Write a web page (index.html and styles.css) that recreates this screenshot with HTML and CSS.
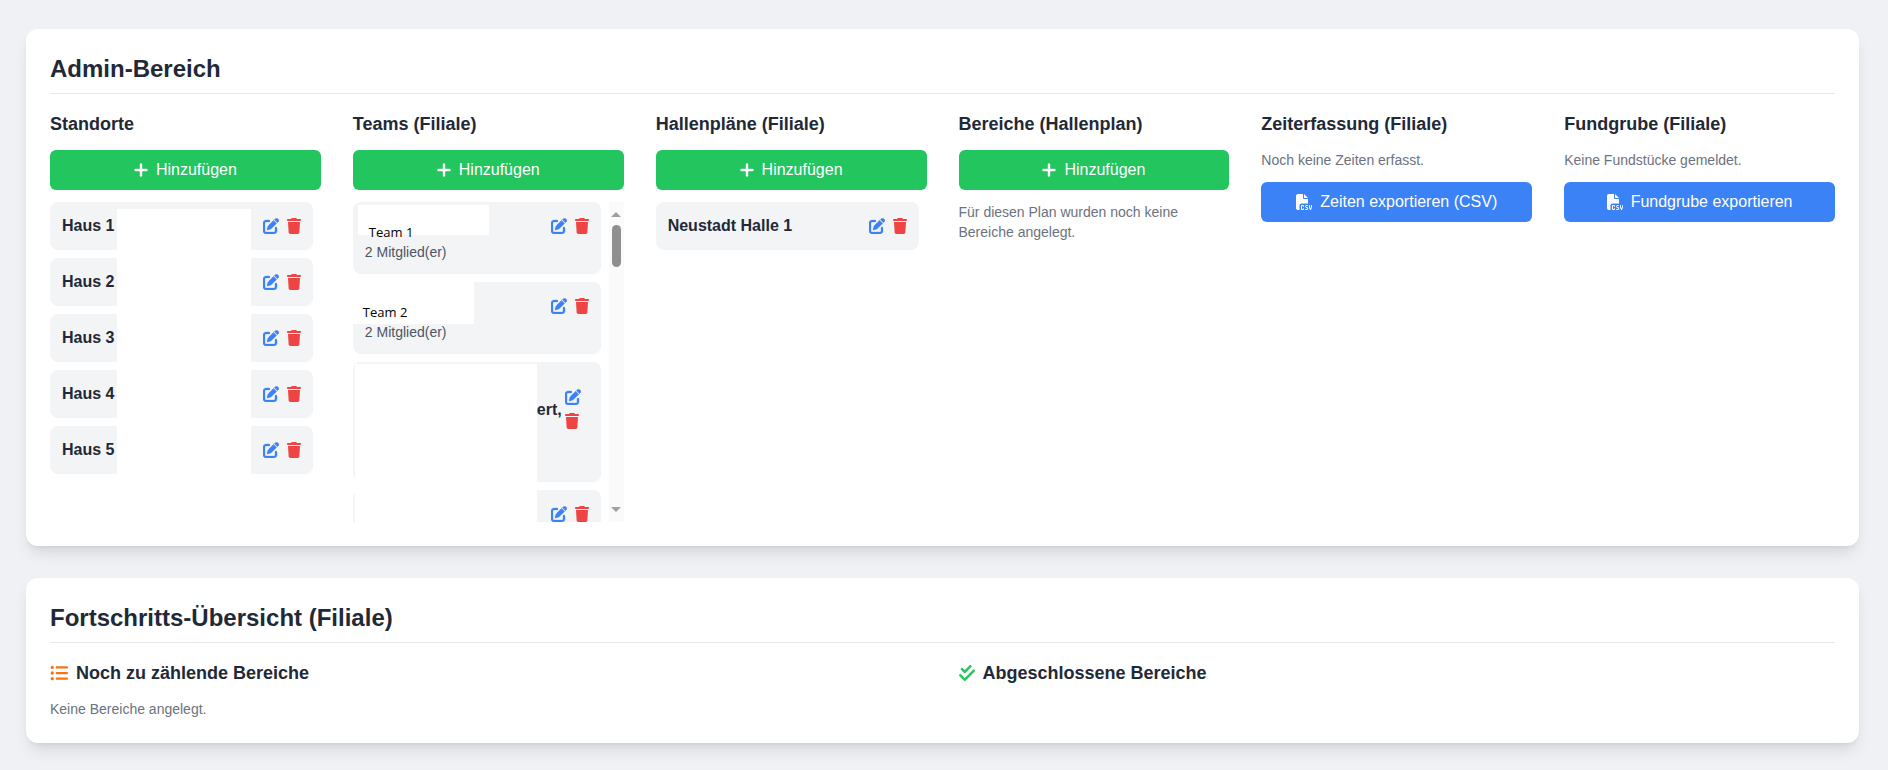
FILE: index.html
```html
<!DOCTYPE html>
<html lang="de">
<head>
<meta charset="utf-8">
<title>Admin-Bereich</title>
<link rel="stylesheet" href="styles.css">
</head>
<body>
<svg class="sprite" aria-hidden="true">
  <symbol id="i-edit" viewBox="0 0 512 512"><path d="M471.6 21.7c-21.9-21.9-57.3-21.9-79.2 0L362.3 51.7l97.9 97.9 30.1-30.1c21.9-21.9 21.9-57.3 0-79.2L471.6 21.7zm-299.2 220c-6.1 6.1-10.8 13.6-13.5 21.9l-29.6 88.8c-2.9 8.6-.6 18.1 5.8 24.6s15.9 8.7 24.6 5.8l88.8-29.6c8.2-2.7 15.7-7.4 21.9-13.5L437.7 172.3 339.7 74.3 172.4 241.7zM96 64C43 64 0 107 0 160V416c0 53 43 96 96 96H352c53 0 96-43 96-96V320c0-17.7-14.3-32-32-32s-32 14.3-32 32v96c0 17.7-14.3 32-32 32H96c-17.7 0-32-14.3-32-32V160c0-17.7 14.3-32 32-32h96c17.7 0 32-14.3 32-32s-14.3-32-32-32H96z"/></symbol>
  <symbol id="i-trash" viewBox="0 0 448 512"><path d="M135.2 17.7L128 32H32C14.3 32 0 46.3 0 64S14.3 96 32 96H416c17.7 0 32-14.3 32-32s-14.3-32-32-32H320l-7.2-14.3C307.4 6.8 296.3 0 284.2 0H163.8c-12.1 0-23.2 6.8-28.6 17.7zM416 128H32L53.2 467c1.6 25.3 22.6 45 47.9 45H346.9c25.3 0 46.3-19.7 47.9-45L416 128z"/></symbol>
  <symbol id="i-plus" viewBox="0 0 448 512"><path d="M256 80c0-17.7-14.3-32-32-32s-32 14.3-32 32V224H48c-17.7 0-32 14.3-32 32s14.3 32 32 32H192V432c0 17.7 14.3 32 32 32s32-14.3 32-32V288H400c17.7 0 32-14.3 32-32s-14.3-32-32-32H256V80z"/></symbol>
  <symbol id="i-csv" viewBox="0 0 512 512"><path d="M0 64C0 28.7 28.7 0 64 0H224V128c0 17.7 14.3 32 32 32H384V304H176c-35.3 0-64 28.7-64 64V512H64c-35.3 0-64-28.7-64-64V64zm384 64H256V0L384 128zM200 352h16c22.1 0 40 17.9 40 40v8c0 8.8-7.2 16-16 16s-16-7.2-16-16v-8c0-4.4-3.6-8-8-8H200c-4.4 0-8 3.6-8 8v80c0 4.4 3.6 8 8 8h16c4.4 0 8-3.6 8-8v-8c0-8.8 7.2-16 16-16s16 7.2 16 16v8c0 22.1-17.9 40-40 40H200c-22.1 0-40-17.9-40-40V392c0-22.1 17.9-40 40-40zm133.1 0H368c8.8 0 16 7.2 16 16s-7.2 16-16 16H333.1c-7.2 0-13.1 5.9-13.1 13.1c0 5.2 3 9.9 7.8 12l37.4 16.6c16.3 7.2 26.8 23.4 26.8 41.2c0 24.9-20.2 45.1-45.1 45.1H304c-8.8 0-16-7.2-16-16s7.2-16 16-16h47.9c7.2 0 13.1-5.9 13.1-13.1c0-5.2-3-9.9-7.8-12l-37.4-16.6c-16.3-7.2-26.8-23.4-26.8-41.2c0-24.9 20.2-45.1 45.1-45.1zm98.9 0c8.8 0 16 7.2 16 16v31.6c0 23 5.5 45.6 16 66c10.5-20.3 16-42.9 16-66V368c0-8.8 7.2-16 16-16s16 7.2 16 16v31.6c0 34.7-10.3 68.7-29.6 97.6l-5.1 7.7c-3 4.5-8 7.1-13.3 7.1s-10.3-2.7-13.3-7.1l-5.1-7.7c-19.3-28.9-29.6-62.9-29.6-97.6V368c0-8.8 7.2-16 16-16z"/></symbol>
  <symbol id="i-list" viewBox="0 0 512 512"><path d="M64 144a48 48 0 1 0 0-96 48 48 0 1 0 0 96zM192 64c-17.7 0-32 14.3-32 32s14.3 32 32 32H480c17.7 0 32-14.3 32-32s-14.3-32-32-32H192zm0 160c-17.7 0-32 14.3-32 32s14.3 32 32 32H480c17.7 0 32-14.3 32-32s-14.3-32-32-32H192zm0 160c-17.7 0-32 14.3-32 32s14.3 32 32 32H480c17.7 0 32-14.3 32-32s-14.3-32-32-32H192zM64 464a48 48 0 1 0 0-96 48 48 0 1 0 0 96zm48-208a48 48 0 1 0 -96 0 48 48 0 1 0 96 0z"/></symbol>
  <symbol id="i-check" viewBox="0 0 448 512"><path d="M342.6 86.6c12.5-12.5 12.5-32.8 0-45.3s-32.8-12.5-45.3 0L160 178.7l-57.4-57.4c-12.5-12.5-32.8-12.5-45.3 0s-12.5 32.8 0 45.3l80 80c12.5 12.5 32.8 12.5 45.3 0l160-160zm96 128c12.5-12.5 12.5-32.8 0-45.3s-32.8-12.5-45.3 0L160 402.7 54.6 297.4c-12.5-12.5-32.8-12.5-45.3 0s-12.5 32.8 0 45.3l128 128c12.5 12.5 32.8 12.5 45.3 0l256-256z"/></symbol>
</svg>

<div class="topbar"></div>
<main class="page">
  <section class="card">
    <h2 class="card-title">Admin-Bereich</h2>
    <div class="columns">
      <div class="column">
        <h3 class="col-title">Standorte</h3>
        <button class="btn btn-green"><svg class="btn-icon-plus"><use href="#i-plus"/></svg>Hinzufügen</button>
        <div class="list list-static">
          <div class="item"><div class="item-main"><div class="item-name">Haus 1</div></div><div class="actions"><svg class="ic-edit"><use href="#i-edit"/></svg><svg class="ic-trash"><use href="#i-trash"/></svg></div></div>
          <div class="item"><div class="item-main"><div class="item-name">Haus 2</div></div><div class="actions"><svg class="ic-edit"><use href="#i-edit"/></svg><svg class="ic-trash"><use href="#i-trash"/></svg></div></div>
          <div class="item"><div class="item-main"><div class="item-name">Haus 3</div></div><div class="actions"><svg class="ic-edit"><use href="#i-edit"/></svg><svg class="ic-trash"><use href="#i-trash"/></svg></div></div>
          <div class="item"><div class="item-main"><div class="item-name">Haus 4</div></div><div class="actions"><svg class="ic-edit"><use href="#i-edit"/></svg><svg class="ic-trash"><use href="#i-trash"/></svg></div></div>
          <div class="item"><div class="item-main"><div class="item-name">Haus 5</div></div><div class="actions"><svg class="ic-edit"><use href="#i-edit"/></svg><svg class="ic-trash"><use href="#i-trash"/></svg></div></div>
          <div class="patch patch-haus"></div>
        </div>
      </div>

      <div class="column">
        <h3 class="col-title">Teams (Filiale)</h3>
        <button class="btn btn-green"><svg class="btn-icon-plus"><use href="#i-plus"/></svg>Hinzufügen</button>
        <div class="scroll-wrap">
          <div class="list list-scroll">
            <div class="item">
              <div class="item-main"><div class="item-name">&nbsp;</div><div class="item-sub">2 Mitglied(er)</div></div>
              <div class="actions"><svg class="ic-edit"><use href="#i-edit"/></svg><svg class="ic-trash"><use href="#i-trash"/></svg></div>
              <div class="patch patch-team1">Team 1</div>
            </div>
            <div class="item">
              <div class="item-main"><div class="item-name">&nbsp;</div><div class="item-sub">2 Mitglied(er)</div></div>
              <div class="actions"><svg class="ic-edit"><use href="#i-edit"/></svg><svg class="ic-trash"><use href="#i-trash"/></svg></div>
              <div class="patch patch-team2">Team 2</div>
            </div>
            <div class="item">
              <div class="item-main item-main-wrapped"><div class="item-name">&nbsp;<br>ert,<br>&nbsp;</div><div class="item-sub">&nbsp;</div></div>
              <div class="actions actions-stacked"><svg class="ic-edit"><use href="#i-edit"/></svg><svg class="ic-trash"><use href="#i-trash"/></svg></div>
              <div class="patch patch-team3"></div>
            </div>
            <div class="item">
              <div class="item-main"><div class="item-name">&nbsp;</div><div class="item-sub">&nbsp;</div></div>
              <div class="actions"><svg class="ic-edit"><use href="#i-edit"/></svg><svg class="ic-trash"><use href="#i-trash"/></svg></div>
            </div>
          </div>
          <div class="scrollbar" aria-hidden="true">
            <span class="sb-up"></span>
            <span class="sb-thumb"></span>
            <span class="sb-down"></span>
          </div>
        </div>
      </div>

      <div class="column">
        <h3 class="col-title">Hallenpläne (Filiale)</h3>
        <button class="btn btn-green"><svg class="btn-icon-plus"><use href="#i-plus"/></svg>Hinzufügen</button>
        <div class="list list-static">
          <div class="item"><div class="item-main"><div class="item-name">Neustadt Halle 1</div></div><div class="actions"><svg class="ic-edit"><use href="#i-edit"/></svg><svg class="ic-trash"><use href="#i-trash"/></svg></div></div>
        </div>
      </div>

      <div class="column">
        <h3 class="col-title">Bereiche (Hallenplan)</h3>
        <button class="btn btn-green"><svg class="btn-icon-plus"><use href="#i-plus"/></svg>Hinzufügen</button>
        <p class="note">Für diesen Plan wurden noch keine Bereiche angelegt.</p>
      </div>

      <div class="column">
        <h3 class="col-title">Zeiterfassung (Filiale)</h3>
        <p class="note note-above">Noch keine Zeiten erfasst.</p>
        <button class="btn btn-blue"><svg class="btn-icon-csv"><use href="#i-csv"/></svg>Zeiten exportieren (CSV)</button>
      </div>

      <div class="column">
        <h3 class="col-title">Fundgrube (Filiale)</h3>
        <p class="note note-above">Keine Fundstücke gemeldet.</p>
        <button class="btn btn-blue"><svg class="btn-icon-csv"><use href="#i-csv"/></svg>Fundgrube exportieren</button>
      </div>
    </div>
  </section>

  <section class="card">
    <h2 class="card-title">Fortschritts-Übersicht (Filiale)</h2>
    <div class="progress">
      <div>
        <h3 class="col-title progress-title"><svg class="ic-list"><use href="#i-list"/></svg>Noch zu zählende Bereiche</h3>
        <p class="note">Keine Bereiche angelegt.</p>
      </div>
      <div>
        <h3 class="col-title progress-title"><svg class="ic-check"><use href="#i-check"/></svg>Abgeschlossene Bereiche</h3>
      </div>
    </div>
  </section>
</main>
</body>
</html>
```
FILE: styles.css
```css
* { box-sizing: border-box; }
html, body { margin: 0; padding: 0; }
body {
  background: #f0f1f5;
  color: #1f2937;
  font-family: "Liberation Sans", Arial, sans-serif;
  height: 770px;
  overflow: hidden;
}
.sprite { display: none; }
.topbar { height: 0; box-shadow: 0 1px 4px rgba(0, 0, 0, .12); }
.page {
  display: flex;
  flex-direction: column;
  gap: 32px;
  padding: 29px 29px 0 26px;
}
.card {
  background: #fff;
  border-radius: 12px;
  padding: 24px;
  box-shadow: 0 10px 15px -3px rgba(0, 0, 0, .1), 0 4px 6px -4px rgba(0, 0, 0, .1);
}
.card-title {
  margin: 0 0 16px;
  padding-bottom: 8px;
  border-bottom: 1px solid #e5e7eb;
  font-size: 24px;
  line-height: 32px;
  font-weight: 700;
}
.columns {
  display: grid;
  grid-template-columns: repeat(6, minmax(0, 1fr));
  column-gap: 32px;
}
.col-title {
  margin: 0 0 12px;
  font-size: 18px;
  line-height: 28px;
  font-weight: 700;
}
.btn {
  display: flex;
  align-items: center;
  justify-content: center;
  width: 100%;
  height: 40px;
  border: 0;
  border-radius: 6px;
  color: #fff;
  font: 400 16px/24px "Liberation Sans", Arial, sans-serif;
}
.btn-green { background: #22c55e; margin-bottom: 12px; }
.btn-blue { background: #3b82f6; }
.btn-icon-plus { width: 14px; height: 16px; margin-right: 8px; fill: #fff; stroke: #fff; stroke-width: 14; }
.btn-icon-csv { width: 16px; height: 16px; margin-right: 8px; fill: #fff; }
.list {
  position: relative;
  display: flex;
  flex-direction: column;
  gap: 8px;
  padding-right: 8px;
}
.scroll-wrap { display: flex; height: 320px; }
.list-scroll { flex: 1; min-width: 0; overflow: hidden; }
.scrollbar {
  flex: none;
  width: 15px;
  display: flex;
  flex-direction: column;
  align-items: center;
  padding: 10px 0;
  background: #fafafa;
}
.sb-up, .sb-down {
  flex: none;
  width: 0;
  height: 0;
  border-left: 5px solid transparent;
  border-right: 5px solid transparent;
}
.sb-up { border-bottom: 5px solid #a0a0a0; }
.sb-down { border-top: 5px solid #a0a0a0; margin-top: auto; }
.sb-thumb {
  flex: none;
  width: 9px;
  height: 42px;
  margin-top: 8px;
  border-radius: 5px;
  background: #8f8f8f;
}
.item {
  position: relative;
  flex: none;
  display: flex;
  justify-content: space-between;
  padding: 12px;
  background: #f3f4f6;
  border-radius: 8px;
}
.item-main { flex: 1; min-width: 0; }
.item-main-wrapped { text-align: right; padding-right: 3px; }
.item-name { font-size: 16px; line-height: 24px; font-weight: 700; }
.item-sub { margin-top: 4px; font-size: 14px; line-height: 20px; color: #4b5563; text-align: left; }
.actions { flex: none; display: flex; align-items: center; gap: 8px; height: 24px; }
.actions-stacked {
  flex-direction: column;
  align-items: flex-start;
  margin-top: 15px;
  width: 24px;
  height: auto;
}
.ic-edit { display: block; width: 16px; height: 16px; fill: #3b82f6; stroke: #3b82f6; stroke-width: 10; }
.ic-trash { display: block; width: 14px; height: 16px; fill: #ef4444; }
.patch { position: absolute; z-index: 1; background: #fff; }
.patch-haus { left: 67px; top: 7px; width: 134px; height: 265px; }
.patch-team1, .patch-team2 {
  color: #000;
  font: 400 13px/18px "Open Sans", sans-serif;
}
.patch-team1 { left: 5px; top: 3px; width: 131px; height: 30px; padding: 18px 0 0 11px; }
.patch-team2 { left: 0; top: 0; width: 121px; height: 42px; padding: 21px 0 0 10px; }
.patch-team3 { left: 2px; top: 2px; width: 182px; height: 160px; }
.note {
  margin: 0;
  font-size: 14px;
  line-height: 20px;
  color: #6b7280;
}
.note-above { margin-bottom: 12px; }
.progress {
  display: grid;
  grid-template-columns: repeat(2, minmax(0, 1fr));
  column-gap: 32px;
}
.progress-title { display: flex; align-items: center; gap: 8px; }
.ic-list { width: 18px; height: 18px; fill: #f97316; }
.ic-check { width: 16px; height: 18px; fill: #22c55e; stroke: #22c55e; stroke-width: 10; }
```
